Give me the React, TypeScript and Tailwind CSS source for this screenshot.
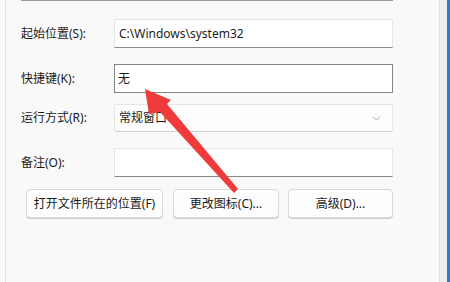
import { ChevronDown } from "lucide-react";

const font = { fontFamily: '"Noto Sans", "Noto Sans CJK SC", sans-serif' };

function Row({ label, children, className }: { label: string; children: React.ReactNode; className?: string }) {
  return (
    <div className={"flex items-center " + (className ?? "")}>
      <div className="w-[93px] shrink-0 text-[12px] text-[#1b1b1b]">{label}</div>
      {children}
    </div>
  );
}

function Btn({ children, className }: { children: React.ReactNode; className?: string }) {
  return (
    <button
      className={
        "h-[29px] rounded-[4px] border border-[#d9d9d9] bg-[#fdfdfd] text-[12px] text-[#1b1b1b] shadow-[0_1px_0_#cfcfcf] " +
        (className ?? "")
      }
    >
      {children}
    </button>
  );
}

export default function App() {
  return (
    <div className="relative flex h-[282px] w-[450px] overflow-hidden bg-[#f9f9f9]" style={font}>
      <div className="w-[5px] shrink-0" />
      <div className="flex w-[435px] shrink-0 flex-col border-x border-[#e2e2e2] pl-[15px]">
        <div className="h-[1px] w-[372px] bg-[#9c9c9c]" />

        <Row label="起始位置(S):" className="mt-[18px]">
          <div className="flex h-[29px] w-[279px] items-center border border-[#e6e6e6] border-b-[#8a8a8a] bg-white pl-[4px] text-[12px] text-[#1b1b1b]">
            C:\Windows\system32
          </div>
        </Row>

        <Row label="快捷键(K):" className="mt-[16px]">
          <div className="flex h-[29px] w-[279px] items-start border border-[#858585] bg-white pl-[3px] pt-[5px] text-[12px] text-[#1b1b1b]">
            无
          </div>
        </Row>

        <Row label="运行方式(R):" className="mt-[11px]">
          <div className="flex h-[28px] w-[279px] items-center justify-between rounded-[3px] border border-[#e5e5e5] border-b-[#cfcfcf] bg-[#fdfdfd] pl-[4px] pr-[9px] text-[12px] text-[#1b1b1b]">
            <span>常规窗口</span>
            <ChevronDown size={13} strokeWidth={1.2} className="text-[#777]" />
          </div>
        </Row>

        <Row label="备注(O):" className="mt-[16px]">
          <div className="h-[29px] w-[279px] border border-[#e6e6e6] border-b-[#8a8a8a] bg-white" />
        </Row>

        <div className="mt-[12px] flex gap-[10px] pl-[5px]">
          <Btn className="w-[137px]">打开文件所在的位置(F)</Btn>
          <Btn className="w-[106px]">更改图标(C)...</Btn>
          <Btn className="ml-[-1px] w-[105px]">高级(D)...</Btn>
        </div>
      </div>
      <div className="w-[7px] shrink-0 bg-[#eeeeee]" />
      <div className="w-[3px] shrink-0 bg-[#2a7bd4]" />

      <svg className="pointer-events-none absolute left-0 top-0" width="450" height="282" viewBox="0 0 450 282">
        <polygon
          points="145,89 171,100 167,104 238,189 234,193 160,112 149,114"
          fill="#ef3b3b"
        />
      </svg>
    </div>
  );
}
